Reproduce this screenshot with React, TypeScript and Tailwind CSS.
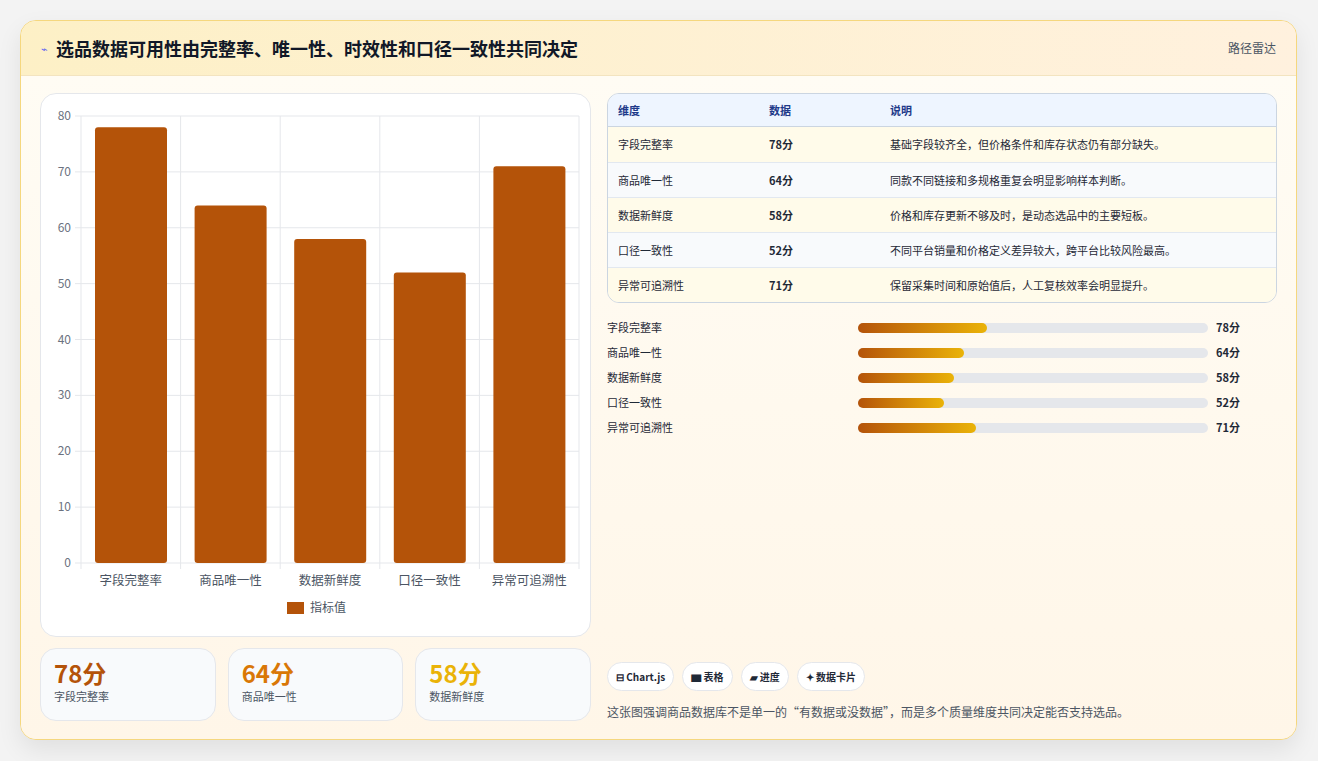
const items = [
  { name: "字段完整率", v: 78, desc: "基础字段较齐全，但价格条件和库存状态仍有部分缺失。" },
  { name: "商品唯一性", v: 64, desc: "同款不同链接和多规格重复会明显影响样本判断。" },
  { name: "数据新鲜度", v: 58, desc: "价格和库存更新不够及时，是动态选品中的主要短板。" },
  { name: "口径一致性", v: 52, desc: "不同平台销量和价格定义差异较大，跨平台比较风险最高。" },
  { name: "异常可追溯性", v: 71, desc: "保留采集时间和原始值后，人工复核效率会明显提升。" },
]

function Chart() {
  const x0 = 40, x1 = 538, y0 = 22, y1 = 469
  const step = (x1 - x0) / 5
  const y = (v: number) => y1 - ((y1 - y0) * v) / 80
  return (
    <svg width="550" height="543" className="block">
      {[0, 10, 20, 30, 40, 50, 60, 70, 80].map((t) => (
        <g key={t}>
          <line x1={x0 - 6} x2={x1} y1={y(t)} y2={y(t)} stroke="#e5e7eb" />
          <text x={x0 - 10} y={y(t) + 4} textAnchor="end" fontSize="12" fill="#6b7280">{t}</text>
        </g>
      ))}
      {[0, 1, 2, 3, 4, 5].map((i) => (
        <line key={i} x1={x0 + step * i} x2={x0 + step * i} y1={y0} y2={y1 + 6} stroke="#e5e7eb" />
      ))}
      {items.map((it, i) => (
        <g key={it.name}>
          <rect x={x0 + step * i + 14} y={y(it.v)} width={72} height={y1 - y(it.v)} rx="3" fill="#b45309" />
          <text x={x0 + step * i + step / 2} y={y1 + 22} textAnchor="middle" fontSize="12.5" fill="#4b5563">{it.name}</text>
        </g>
      ))}
      <rect x="246" y="508" width="17" height="12" fill="#b45309" />
      <text x="269" y="518" fontSize="12" fill="#4b5563">指标值</text>
    </svg>
  )
}

export default function App() {
  return (
    <div className="min-h-[761px] bg-[#f3f3f3] pt-[20px] pl-[20px] pr-[21px] pb-[21px]" style={{ fontFamily: '"Noto Sans CJK SC", "Noto Sans", sans-serif' }}>
      <div className="overflow-hidden rounded-2xl border border-[#f5d77e] bg-[#fff8ec] shadow-[0_10px_24px_rgba(0,0,0,0.08)]">
        <div className="flex h-[55px] items-center justify-between border-b border-[#f3e4c0] bg-gradient-to-r from-[#fdf0c6] to-[#fff1de] px-5">
          <div className="flex items-center gap-2">
            <span className="text-[11px] text-[#6366f1]">⌁</span>
            <span className="text-[18px] font-bold text-[#111827]">选品数据可用性由完整率、唯一性、时效性和口径一致性共同决定</span>
          </div>
          <span className="text-[12px] text-[#4b5563]">路径雷达</span>
        </div>
        <div className="flex gap-4 bg-gradient-to-b from-[#fffcf4] to-[#fff6e8] px-[19px] pt-[17px] pb-[18px]">
          <div className="flex w-[551px] flex-col gap-[11px]">
            <div className="h-[544px] rounded-2xl border border-[#e5e7eb] bg-white">
              <Chart />
            </div>
            <div className="grid grid-cols-3 gap-3">
              {[
                { v: "78分", l: "字段完整率", c: "text-[#b45309]" },
                { v: "64分", l: "商品唯一性", c: "text-[#d97706]" },
                { v: "58分", l: "数据新鲜度", c: "text-[#eab308]" },
              ].map((s) => (
                <div key={s.l} className="h-[73px] rounded-2xl border border-[#e5e7eb] bg-[#f8fafc] px-[13px] pt-[9px]">
                  <div className={`text-[24px] font-bold leading-[30px] ${s.c}`}>{s.v}</div>
                  <div className="text-[11px] text-[#4b5563]">{s.l}</div>
                </div>
              ))}
            </div>
          </div>
          <div className="flex flex-1 flex-col">
            <div className="overflow-hidden rounded-xl border border-[#cbd5e1] text-[11px]">
              <div className="flex h-[33px] items-center border-b border-[#cbd5e1] bg-[#eef5ff] font-bold text-[#1e3a8a]">
                <div className="w-[161px] pl-[10px]">维度</div>
                <div className="w-[121px]">数据</div>
                <div>说明</div>
              </div>
              {items.map((it, i) => (
                <div key={it.name} className={`flex h-[35px] items-center text-[#1f2937] ${i > 0 ? "border-t border-[#e2e8f0]" : ""} ${i % 2 ? "bg-[#f8fafc]" : "bg-[#fffbea]"}`}>
                  <div className="w-[161px] pl-[10px]">{it.name}</div>
                  <div className="w-[121px] font-semibold">{it.v}分</div>
                  <div>{it.desc}</div>
                </div>
              ))}
            </div>
            <div className="mt-[12px] flex flex-col">
              {items.map((it) => (
                <div key={it.name} className="flex h-[25px] items-center text-[11px] text-[#1f2937]">
                  <div className="w-[251px]">{it.name}</div>
                  <div className="h-[10px] w-[350px] rounded-full bg-[#e5e7eb]">
                    <div className="h-full rounded-full bg-gradient-to-r from-[#b45309] to-[#eab308]" style={{ width: `${it.v * 0.473}%` }} />
                  </div>
                  <div className="ml-[8px] font-bold">{it.v}分</div>
                </div>
              ))}
            </div>
            <div className="mt-auto flex gap-2 text-[10px] font-bold text-[#1f2937]">
              {["⊟ Chart.js", "▆ 表格", "▰ 进度", "✦ 数据卡片"].map((c) => (
                <span key={c} className="rounded-full border border-[#e5e7eb] bg-white px-[8px] py-[6px]">{c}</span>
              ))}
            </div>
            <div className="mt-[12px] text-[12px] text-[#4b5563]">这张图强调商品数据库不是单一的“有数据或没数据”，而是多个质量维度共同决定能否支持选品。</div>
          </div>
        </div>
      </div>
    </div>
  )
}
